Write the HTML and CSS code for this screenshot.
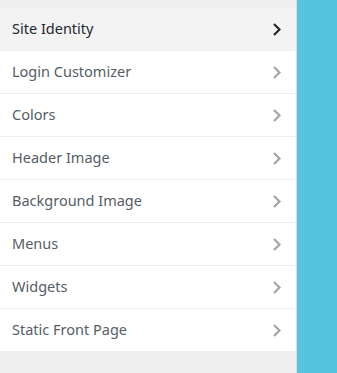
FILE: index.html
```html
<!DOCTYPE html>
<html lang="en">
<head>
  <meta charset="UTF-8">
  <title>Customizer</title>
  <link rel="stylesheet" href="styles.css">
</head>
<body>
  <div class="layout">
    <div class="panel">
      <ul class="sections">
        <li class="section current"><span>Site Identity</span><svg class="chev" viewBox="0 0 8 13"><path d="M1 1l5.5 5.5L1 12"/></svg></li>
        <li class="section"><span>Login Customizer</span><svg class="chev" viewBox="0 0 8 13"><path d="M1 1l5.5 5.5L1 12"/></svg></li>
        <li class="section"><span>Colors</span><svg class="chev" viewBox="0 0 8 13"><path d="M1 1l5.5 5.5L1 12"/></svg></li>
        <li class="section"><span>Header Image</span><svg class="chev" viewBox="0 0 8 13"><path d="M1 1l5.5 5.5L1 12"/></svg></li>
        <li class="section"><span>Background Image</span><svg class="chev" viewBox="0 0 8 13"><path d="M1 1l5.5 5.5L1 12"/></svg></li>
        <li class="section"><span>Menus</span><svg class="chev" viewBox="0 0 8 13"><path d="M1 1l5.5 5.5L1 12"/></svg></li>
        <li class="section"><span>Widgets</span><svg class="chev" viewBox="0 0 8 13"><path d="M1 1l5.5 5.5L1 12"/></svg></li>
        <li class="section"><span>Static Front Page</span><svg class="chev" viewBox="0 0 8 13"><path d="M1 1l5.5 5.5L1 12"/></svg></li>
      </ul>
    </div>
    <div class="preview"></div>
  </div>
</body>
</html>
```

FILE: styles.css
```css
html, body { margin: 0; padding: 0; height: 100%; }
body { font-family: "Noto Sans", "Open Sans", sans-serif; font-size: 14.5px; }
.layout { display: flex; height: 373px; }
.panel { width: 297px; background: #eeeeee; padding-top: 8px; box-sizing: border-box; border-right: 1px solid #dddddd; }
.preview { flex: 1; background: #56c4df; }
.sections { list-style: none; margin: 0; padding: 0; }
.section { display: flex; align-items: center; justify-content: space-between; height: 42px; padding: 0 15px 0 12px; background: #fff; border-bottom: 1px solid #eeeeee; color: #555d66; }
.section span { margin-top: -2px; }
.section.current { background: #f3f3f3; color: #23282d; }
.chev { width: 8px; height: 13px; fill: none; stroke: #a0a5aa; stroke-width: 2.2; }
.current .chev { stroke: #23282d; }
```
